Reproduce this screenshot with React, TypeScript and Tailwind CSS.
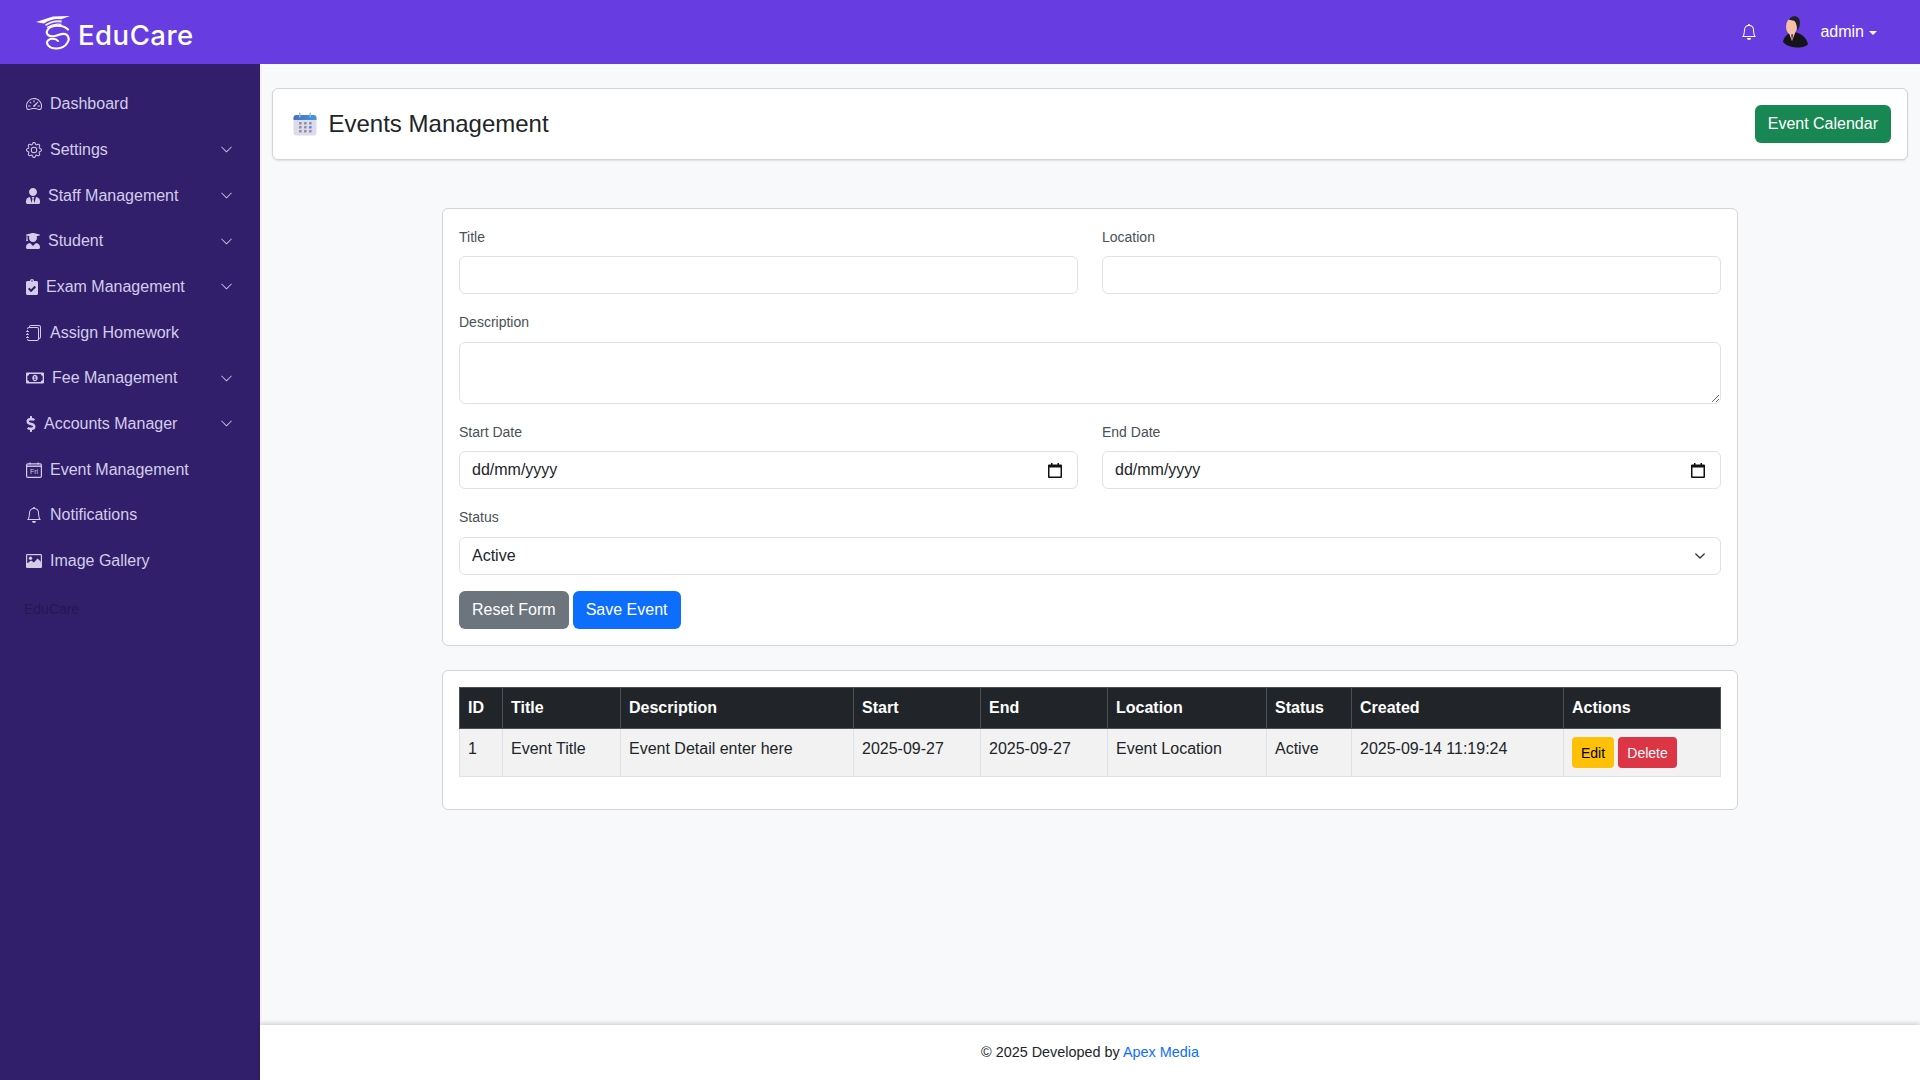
import React from "react";
import { BsJournals, BsBell, BsChevronDown, BsSpeedometer2, BsGear } from "react-icons/bs";
import { FaUserTie, FaUserGraduate, FaRegMoneyBillAlt, FaDollarSign, FaClipboardCheck } from "react-icons/fa";

const FriIcon = () => (
  <svg width="16" height="16" viewBox="0 0 16 16" fill="none" className="shrink-0">
    <rect x="0.6" y="1.8" width="14.8" height="13.6" rx="1.2" stroke="currentColor" strokeWidth="1.2" />
    <path d="M0.6 4.2H15.4" stroke="currentColor" strokeWidth="1.4" />
    <path d="M4 0.4V2.6M12 0.4V2.6" stroke="currentColor" strokeWidth="1.2" />
    <text x="8" y="12.4" textAnchor="middle" fontSize="7" fontFamily="Liberation Sans, sans-serif" fill="currentColor">Fri</text>
  </svg>
);

const GalleryIcon = () => (
  <svg width="16" height="14" viewBox="0 0 16 14" className="shrink-0">
    <rect x="0" y="0" width="16" height="14" rx="1.2" fill="currentColor" />
    <rect x="1.2" y="1.2" width="13.6" height="7.800" fill="#311f6b" />
    <circle cx="4.500" cy="4.200" r="1.700" fill="currentColor" />
    <path d="M1.200 9.500 L5 6.500 L8 8.500 L11.500 4.500 L14.800 7.500 V9.500 Z" fill="currentColor" />
  </svg>
);

type NavItem = { label: string; icon: React.ReactNode; chevron?: boolean };

const nav: NavItem[] = [
  { label: "Dashboard", icon: <BsSpeedometer2 size={16} className="shrink-0" /> },
  { label: "Settings", icon: <BsGear size={16} className="shrink-0" />, chevron: true },
  { label: "Staff Management", icon: <FaUserTie size={16} className="shrink-0 w-[14px]" />, chevron: true },
  { label: "Student", icon: <FaUserGraduate size={16} className="shrink-0 w-[14px]" />, chevron: true },
  { label: "Exam Management", icon: <FaClipboardCheck size={16} className="shrink-0 w-[12px]" />, chevron: true },
  { label: "Assign Homework", icon: <BsJournals size={16} className="shrink-0" /> },
  { label: "Fee Management", icon: <FaRegMoneyBillAlt size={18} className="shrink-0" />, chevron: true },
  { label: "Accounts Manager", icon: <FaDollarSign size={16} className="shrink-0 w-[10px]" />, chevron: true },
  { label: "Event Management", icon: <FriIcon /> },
  { label: "Notifications", icon: <BsBell size={16} className="shrink-0" /> },
  { label: "Image Gallery", icon: <GalleryIcon /> },
];

const Logo = () => (
  <svg width="36" height="36" viewBox="0 0 36 36" fill="none" className="shrink-0">
    <path d="M0 7 L17 1.500 L34 1 L25 4.200 Q16 2.800 8 8.500 Z" fill="#fff" />
    <path d="M9 9.500 Q17 4 26 5.500 L25.500 7.500 Q17 6 10 11 Z" fill="#eee9fc" />
    <path d="M11 12.500 Q18 7.800 25.500 9.500" stroke="#fff" strokeWidth="1.300" />
    <path d="M32 14.500 C27 9.500 15 9.500 11.500 15 C9 20 14 22 19 21 C24 20 27 17 31 20 C35 24 31 33 21 33.500 C13 34 9 28 12 25.500 C14 23 20 23 22 26" stroke="#fff" strokeWidth="2.100" strokeLinecap="round" />
  </svg>
);

const Avatar = () => (
  <svg width="28" height="32" viewBox="0 0 28 32" className="shrink-0">
    <path d="M2 26 C3 20 7 18 11 16 C18 16 25 20 27 28 C24 33 8 33 2 26 Z" fill="#14141a" />
    <path d="M8 17 L11 25 L14 17 Z" fill="#e7e7e7" />
    <path d="M9.800 17.500 L11 25 L12.500 17.500 Z" fill="#a3202a" />
    <ellipse cx="10.500" cy="10.500" rx="5.500" ry="8" fill="#f6bfa6" />
    <path d="M8 4 C9 0 15 -1 17.500 2 C20 5 19 11 16.500 15 C16 11 15.500 7 13.500 5 C11.500 4 9.500 4 8 4 Z" fill="#20202a" />
  </svg>
);

const CalendarColor = () => (
  <svg width="24" height="24" viewBox="0 0 24 24" className="shrink-0">
    <defs>
      <linearGradient id="calTop" x1="0" y1="0" x2="1" y2="0">
        <stop offset="0" stopColor="#4a6fbd" />
        <stop offset="1" stopColor="#3d9be3" />
      </linearGradient>
    </defs>
    <rect x="0.5" y="3" width="23" height="20.500" rx="3" fill="#dcdaeb" />
    <path d="M0.500 8 V6 a3 3 0 0 1 3-3 H20.500 a3 3 0 0 1 3 3 V8 Z" fill="url(#calTop)" />
    <rect x="6" y="0.500" width="1.500" height="5" rx="0.700" fill="#a9b8d8" />
    <rect x="16.500" y="0.500" width="1.500" height="5" rx="0.700" fill="#a9b8d8" />
    {[6, 11, 16].map((x) =>
      [10, 14, 18].map((y) => (
        <rect key={`${x}-${y}`} x={x} y={y} width="2.600" height="2.400" rx="0.400" fill={x === 16 && y === 14 ? "#4a90e2" : "#8f8da3"} />
      ))
    )}
  </svg>
);

const DateIcon = () => (
  <svg width="14" height="15" viewBox="0 0 14 15" className="shrink-0">
    <path d="M3 0 H4.500 V1.500 H9.500 V0 H11 V1.500 H13 A1 1 0 0 1 14 2.500 V14 A1 1 0 0 1 13 15 H1 A1 1 0 0 1 0 14 V2.500 A1 1 0 0 1 1 1.500 H3 Z M1.500 4.500 V13.500 H12.500 V4.500 Z" fill="#111" />
  </svg>
);

const inputCls =
  "block w-full h-[38px] rounded-[6px] border border-[#dee2e6] bg-white px-3 text-base text-[#212529] outline-none";
const labelCls = "block text-sm leading-[21px] mb-[8.5px] text-[#495057]";

const Field = ({ label, children, className = "" }: { label: string; children: React.ReactNode; className?: string }) => (
  <div className={className}>
    <label className={labelCls}>{label}</label>
    {children}
  </div>
);

const DateField = ({ label }: { label: string }) => (
  <Field label={label}>
    <div className={`${inputCls} flex items-center justify-between pr-[15px] leading-6`}>
      <span>dd/mm/yyyy</span>
      <DateIcon />
    </div>
  </Field>
);

const cols = [
  { h: "ID", d: "1", w: 43 },
  { h: "Title", d: "Event Title", w: 118 },
  { h: "Description", d: "Event Detail enter here", w: 233 },
  { h: "Start", d: "2025-09-27", w: 127 },
  { h: "End", d: "2025-09-27", w: 127 },
  { h: "Location", d: "Event Location", w: 159 },
  { h: "Status", d: "Active", w: 85 },
  { h: "Created", d: "2025-09-14 11:19:24", w: 212 },
  { h: "Actions", d: "", w: 157 },
];

export default function App() {
  return (
    <div className="flex h-[1080px] w-full flex-col overflow-hidden bg-[#f8f9fb] font-['Liberation_Sans',Arial,sans-serif] text-base text-[#212529]">
      <header className="flex h-16 shrink-0 items-center justify-between bg-[#673de2] pl-9 pr-[43px] text-white">
        <div className="flex items-center gap-[6px] pt-[1px]">
          <Logo />
          <span className="mt-[6px] font-['Inter',sans-serif] text-[27.5px] font-medium leading-none tracking-[0.5px]">EduCare</span>
        </div>
        <div className="flex items-center">
          <BsBell size={16} className="mr-[24.5px]" />
          <Avatar />
          <span className="ml-[11px] text-base">admin</span>
          <span className="ml-[5px] mt-[1px] h-0 w-0 border-x-[4px] border-t-[4px] border-x-transparent border-t-white" />
        </div>
      </header>
      <div className="flex min-h-0 flex-1">
        <aside className="w-[260px] shrink-0 bg-[#311f6b] pl-[26px] pr-[27px] pt-[17.3px] text-[#d3cdea]">
          <nav>
            {nav.map((n) => (
              <a key={n.label} className="flex h-[45.7px] items-center gap-2">
                {n.icon}
                <span className="flex-1">{n.label}</span>
                {n.chevron && <BsChevronDown size={13} />}
              </a>
            ))}
          </nav>
          <div className="-ml-[2px] mt-[15.5px] text-sm leading-[21px] text-[#241850]">EduCare</div>
        </aside>
        <div className="flex min-w-0 flex-1 flex-col">
          <main className="flex-1 px-3 pt-6 shadow-[inset_2px_0_0_#f4f1fd]">
            <div className="flex h-[72px] items-center justify-between rounded-[6px] border border-[#d5d5d8] bg-white pl-5 pr-4 shadow-[0_1px_2px_rgba(0,0,0,0.1)]">
              <div className="flex items-center gap-[11.5px]">
                <CalendarColor />
                <h1 className="text-2xl font-normal text-[#212529]">Events Management</h1>
              </div>
              <button className="h-[38px] rounded-[6px] bg-[#198754] px-[13px] text-base text-white">Event Calendar</button>
            </div>

            <div className="mx-auto mt-12 w-[1296px]">
              <form className="rounded-[6px] border border-[#d5d5d8] bg-white px-4 pb-4 pt-[17.5px]">
                <div className="mb-[18px] grid grid-cols-2 gap-6">
                  <Field label="Title"><input className={inputCls} /></Field>
                  <Field label="Location"><input className={inputCls} /></Field>
                </div>
                <Field label="Description" className="mb-[18px]">
                  <textarea className={`${inputCls} !h-[62px] py-1.5 align-top`} />
                </Field>
                <div className="mb-[18px] grid grid-cols-2 gap-6">
                  <DateField label="Start Date" />
                  <DateField label="End Date" />
                </div>
                <Field label="Status" className="mb-[16.5px]">
                  <div className="relative">
                    <select className={`${inputCls} appearance-none`}>
                      <option>Active</option>
                    </select>
                    <svg width="16" height="16" viewBox="0 0 16 16" fill="none" className="pointer-events-none absolute right-[13px] top-[11px]">
                      <path d="M2 5l6 6 6-6" stroke="#343a40" strokeWidth="2" strokeLinecap="round" strokeLinejoin="round" transform="translate(2.4 2.4) scale(0.7)" />
                    </svg>
                  </div>
                </Field>
                <div className="flex gap-1">
                  <button type="button" className="h-[38px] rounded-[6px] bg-[#6c757d] px-[13px] text-white">Reset Form</button>
                  <button type="button" className="h-[38px] w-[108px] rounded-[6px] bg-[#0d6efd] text-white">Save Event</button>
                </div>
              </form>

              <div className="mt-6 h-[139.5px] rounded-[6px] border border-[#d5d5d8] bg-white p-4">
                <table className="w-[1261px] table-fixed border-collapse">
                  <colgroup>
                    {cols.map((c) => (
                      <col key={c.h} style={{ width: c.w }} />
                    ))}
                  </colgroup>
                  <thead>
                    <tr className="h-[41px] bg-[#212529] text-white">
                      {cols.map((c) => (
                        <th key={c.h} className="border border-[#4d5154] px-2 py-2 text-left font-bold leading-6">{c.h}</th>
                      ))}
                    </tr>
                  </thead>
                  <tbody>
                    <tr className="h-[48px] bg-[#f2f2f2]">
                      {cols.map((c) => (
                        <td key={c.h} className="border border-[#dee2e6] px-2 py-2 align-top leading-6">
                          {c.h === "Actions" ? (
                            <div className="flex gap-1">
                              <button className="h-[31px] w-[42px] rounded-[4px] bg-[#ffc107] text-sm text-black">Edit</button>
                              <button className="h-[31px] w-[59px] rounded-[4px] bg-[#dc3545] text-sm text-white">Delete</button>
                            </div>
                          ) : (
                            c.d
                          )}
                        </td>
                      ))}
                    </tr>
                  </tbody>
                </table>
              </div>
            </div>
          </main>
          <footer className="flex h-[55px] shrink-0 items-center justify-center bg-white text-[14.4px] text-[#212529] shadow-[0_-2px_4px_rgba(0,0,0,0.15)]">
            <span>© 2025 Developed by <a className="text-[#0d6efd]">Apex Media</a></span>
          </footer>
        </div>
      </div>
    </div>
  );
}
